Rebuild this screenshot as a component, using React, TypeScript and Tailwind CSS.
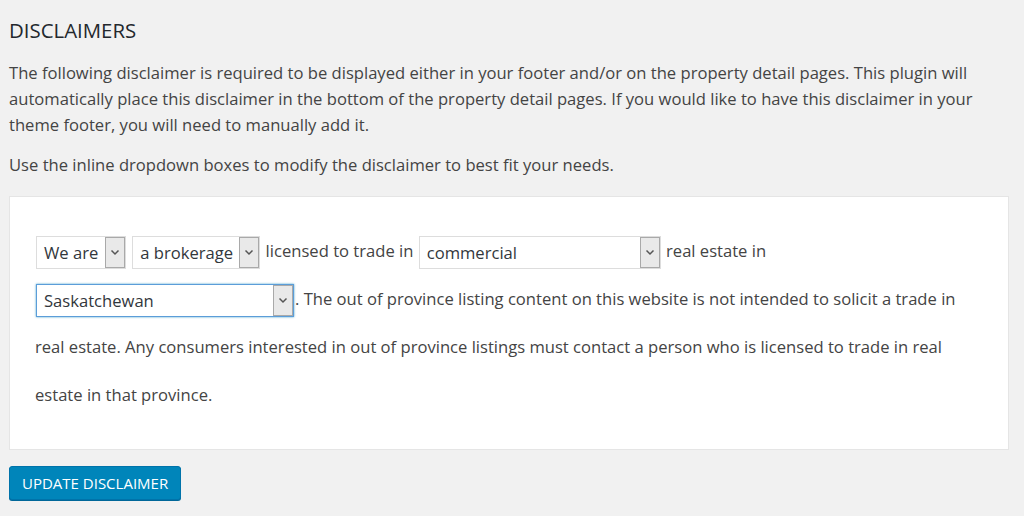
import React from "react";

function Select({ label, width, focused }: { label: string; width: number; focused?: boolean }) {
  return (
    <span
      className={
        "relative inline-flex h-[33px] items-center bg-white align-middle mx-[1px] " +
        (focused ? "border border-[#5b9dd9] shadow-[0_0_2px_rgba(30,140,190,0.8)]" : "border border-[#dddddd]")
      }
      style={{ width }}
    >
      <span className="pl-[7px] leading-[20px] text-[#32373c]">{label}</span>
      <span className="absolute right-0 top-0 bottom-0 flex w-[20px] items-center justify-center border border-[#a9a9a9] bg-[#e9e9e9]">
        <svg width="10" height="7" viewBox="0 0 10 7" fill="none">
          <path d="M1.5 1.5 L5 5 L8.5 1.5" stroke="#555" strokeWidth="1.5" />
        </svg>
      </span>
    </span>
  );
}

export default function App() {
  return (
    <div
      className="min-h-[516px] bg-[#f1f1f1] pl-[9px] pr-[15px] pt-[16px] text-[#444]"
      style={{ fontFamily: '"Open Sans", "Noto Sans", Arial, sans-serif' }}
    >
      <h2 className="text-[20.4px] leading-[28px] font-normal text-[#23282d]">DISCLAIMERS</h2>
      <p className="mt-[16px] text-[16.6px] leading-[26px]">
        The following disclaimer is required to be displayed either in your footer and/or on the property detail pages. This plugin will automatically place this disclaimer in the bottom of the property detail pages. If you would like to have this disclaimer in your theme footer, you will need to manually add it.
      </p>
      <p className="mt-[14px] text-[16.6px] leading-[26px]">
        Use the inline dropdown boxes to modify the disclaimer to best fit your needs.
      </p>
      <div className="mt-[18px] border border-[#e5e5e5] bg-white pl-[25px] pr-[34px] pt-[30px] pb-[30px]">
        <p className="text-[16.6px] leading-[48px]">
          <Select label="We are" width={90} /> <Select label="a brokerage" width={128} /> licensed to trade in{" "}
          <Select label="commercial" width={242} /> real estate in <Select label="Saskatchewan" width={258} focused />. The out of province listing content on this website is not intended to solicit a trade in real estate. Any consumers interested in out of province listings must contact a person who is licensed to trade in real estate in that province.
        </p>
      </div>
      <button className="mt-[16px] h-[34px] rounded-[3px] border border-[#0073aa] bg-[#0085ba] px-[12px] text-[15px] text-white shadow-[0_1px_0_#006799]">
        UPDATE DISCLAIMER
      </button>
    </div>
  );
}
